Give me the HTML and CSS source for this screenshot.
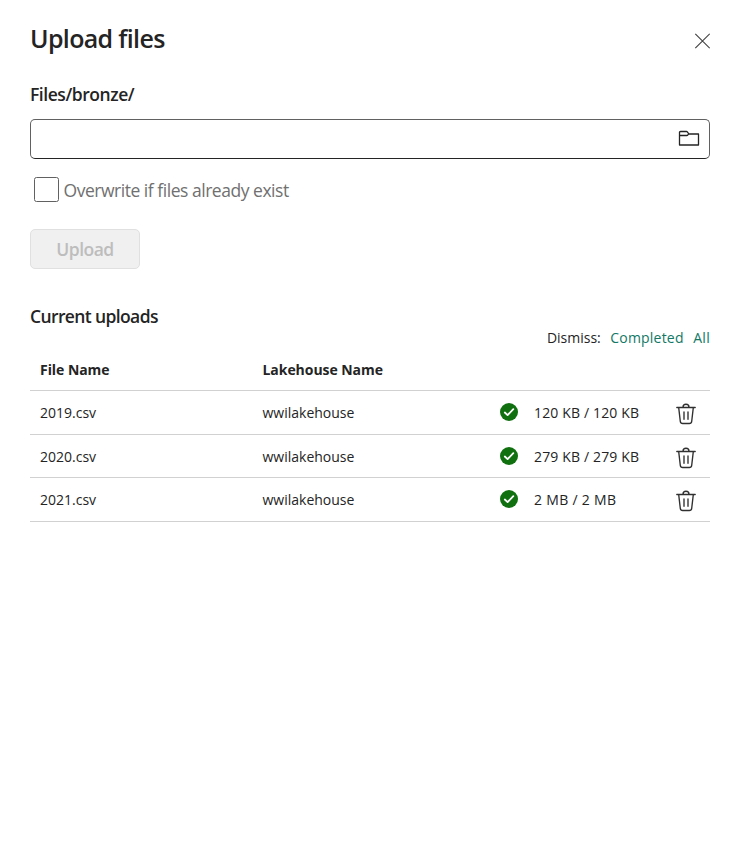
FILE: index.html
```html
<!DOCTYPE html>
<html lang="en">
<head>
<meta charset="utf-8">
<title>Upload files</title>
<link rel="stylesheet" href="styles.css">
</head>
<body>
<svg class="defs" width="0" height="0">
  <symbol id="check" viewBox="0 0 18 18"><circle cx="9" cy="9" r="9" fill="#107010"/><path d="M4.8 9.5 7.6 12.1 13.3 6.2" fill="none" stroke="#fff" stroke-width="1.8" stroke-linecap="round" stroke-linejoin="round"/></symbol>
  <symbol id="trash" viewBox="0 0 20 22"><path d="M.8 4.5h18.4M7 4.2a3 3 0 0 1 6 0M2.7 4.7l1.6 13.7a2.4 2.4 0 0 0 2.4 2.1h6.6a2.4 2.4 0 0 0 2.4-2.1l1.6-13.7M8 9v7.2M12 9v7.2" fill="none" stroke="#303030" stroke-width="1.35" stroke-linecap="round"/></symbol>
</svg>
<main class="panel">
  <header class="header">
    <h1 class="title">Upload files</h1>
    <button class="close" aria-label="Close"><svg width="16" height="16" viewBox="0 0 16 16"><path d="M1.3.8 15.7 15.2M15.7.8 1.3 15.2" stroke="#424242" stroke-width="1.15" fill="none"/></svg></button>
  </header>
  <h2 class="path">Files/bronze/</h2>
  <div class="field">
    <svg width="22" height="17" viewBox="0 0 22 17"><path d="M1.5 5.5v-3a1 1 0 0 1 1-1h6a1 1 0 0 1 .8.4l1.3 1.7a1 1 0 0 0 .8.4h9.1v11h-19zM1.5 5.5h7.2a1.5 1.5 0 0 0 1.2-.7l.8-1" fill="none" stroke="#242424" stroke-width="1.3" stroke-linejoin="round"/></svg>
  </div>
  <label class="option"><span class="box"></span><span class="option-text">Overwrite if files already exist</span></label>
  <button class="upload" disabled>Upload</button>
  <h2 class="section">Current uploads</h2>
  <div class="dismiss"><span class="dismiss-label">Dismiss:</span><a class="completed">Completed</a><a class="all">All</a></div>
  <div class="table">
    <div class="row head"><span class="head-file">File Name</span><span class="head-lake">Lakehouse Name</span></div>
    <div class="row"><span class="file">2019.csv</span><span class="lake">wwilakehouse</span><svg class="check"><use href="#check"/></svg><span class="size">120 KB / 120 KB</span><svg class="trash"><use href="#trash"/></svg></div>
    <div class="row short"><span class="file">2020.csv</span><span class="lake">wwilakehouse</span><svg class="check"><use href="#check"/></svg><span class="size">279 KB / 279 KB</span><svg class="trash"><use href="#trash"/></svg></div>
    <div class="row"><span class="file">2021.csv</span><span class="lake">wwilakehouse</span><svg class="check"><use href="#check"/></svg><span class="size size-wide">2 MB / 2 MB</span><svg class="trash"><use href="#trash"/></svg></div>
  </div>
</main>
</body>
</html>
```
FILE: styles.css
```css
* { box-sizing: border-box; }
body { margin: 0; background: #fff; color: #242424; font-family: "Open Sans", "Noto Sans", sans-serif; }
h1, h2 { margin: 0; }
button { font-family: inherit; padding: 0; }
.defs { display: block; height: 0; }
.panel { width: 736px; height: 862px; padding: 19px 26px 0 30px; white-space: nowrap; }
.header { display: flex; justify-content: space-between; height: 64px; }
.title { font-size: 25px; line-height: 38px; font-weight: 540; letter-spacing: -0.65px; }
.close { width: 16px; height: 16px; margin-top: 14px; border: 0; background: none; display: flex; }
.path { font-size: 17.5px; line-height: 22px; font-weight: 550; letter-spacing: -0.45px; }
.field { display: flex; align-items: center; justify-content: flex-end; width: 680px; height: 40px; margin-top: 14px; padding: 0 9px 2px 0; border: 1px solid #616161; border-bottom-color: #242424; border-radius: 5px; }
.option { display: flex; align-items: flex-start; height: 25px; margin: 18px 0 0 4px; color: #707070; }
.box { width: 25px; height: 25px; border: 1px solid #616161; border-radius: 2.5px; }
.option-text { margin-left: 4.5px; font-size: 17.5px; line-height: 26px; letter-spacing: -0.47px; }
.upload { display: block; width: 110px; height: 40px; margin-top: 27px; border: 1px solid #e0e0e0; border-radius: 5px; background: #f0f0f0; color: #bdbdbd; font-size: 17.5px; font-weight: 600; letter-spacing: -0.5px; }
.section { margin-top: 35px; font-size: 17.5px; line-height: 24px; font-weight: 550; letter-spacing: -0.62px; }
.dismiss { display: flex; justify-content: flex-end; width: 680px; height: 20px; margin-top: -1px; font-size: 14px; line-height: 22px; }
.dismiss a { margin-left: 9.5px; color: #117865; }
.dismiss .completed { letter-spacing: 0.2px; }
.dismiss .all { letter-spacing: 0.3px; }
.table { width: 680px; font-size: 14px; }
.row { display: grid; grid-template-columns: 222.5px 237.5px 34px 141.5px 20px; align-items: center; height: 44px; padding-left: 10px; border-bottom: 1px solid #d1d1d1; }
.head { height: 44px; padding-top: 2px; font-weight: 700; letter-spacing: -0.05px; }
.short { height: 43px; }
.check { width: 18px; height: 18px; margin-top: -1px; }
.size { letter-spacing: 0.15px; }
.size-wide { letter-spacing: 0.3px; }
.trash { width: 20px; height: 22px; margin-top: 3px; }
```
